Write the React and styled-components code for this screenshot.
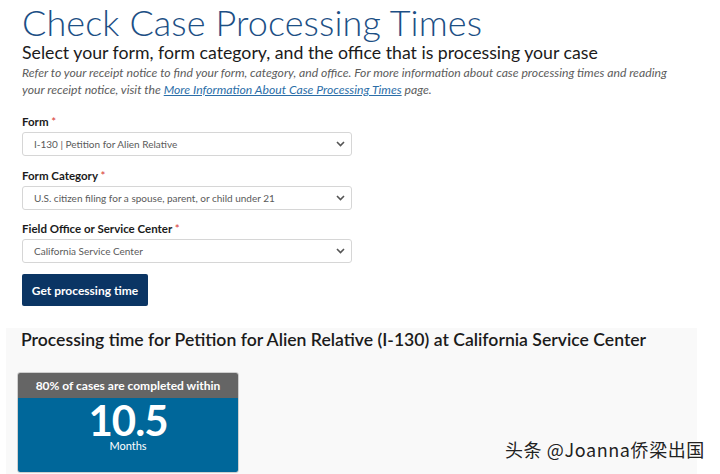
import React from "react";
import styled, { createGlobalStyle } from "styled-components";

const Global = createGlobalStyle`
  body {
    margin: 0;
    background: #fff;
    font-family: Lato, "Liberation Sans", sans-serif;
  }
`;

const Page = styled.div`
  width: 720px;
  height: 474px;
  overflow: hidden;
  position: relative;
`;

const Top = styled.div`
  padding: 0 0 0 22px;
`;

const Title = styled.h1`
  margin: 0;
  font-weight: 300;
  font-size: 36px;
  line-height: 44px;
  color: #1c4f85;
  letter-spacing: 0.1px;
`;

const Subtitle = styled.h2`
  margin: -2px 0 0;
  font-weight: 400;
  font-size: 17.7px;
  line-height: 21px;
  color: #1b1b1b;
`;

const Intro = styled.p`
  margin: 1px 0 0;
  font-style: italic;
  font-size: 12.2px;
  line-height: 17px;
  color: #5c5c5c;
  white-space: nowrap;

  a {
    color: #2b6ea8;
    text-decoration: underline;
  }
`;

const Form = styled.form`
  display: flex;
  flex-direction: column;
  align-items: flex-start;
  gap: 12.5px;
  margin-top: 17px;
`;

const Field = styled.div`
  display: flex;
  flex-direction: column;
`;

const Label = styled.label`
  font-size: 11.5px;
  font-weight: 700;
  color: #1b1b1b;
  line-height: 14px;
  margin-bottom: 3px;

  span {
    color: #d83933;
    font-weight: 400;
  }
`;

const SelectBox = styled.div`
  width: 330px;
  height: 24px;
  box-sizing: border-box;
  border: 1px solid #d6d6d6;
  border-radius: 3px;
  display: flex;
  align-items: center;
  justify-content: space-between;
  padding: 0 6px 0 11px;
  font-size: 10px;
  color: #5a5a5a;
  background: #fff;
`;

const Button = styled.button`
  margin-top: -1.5px;
  width: 126px;
  height: 32px;
  border: none;
  border-radius: 2px;
  background: #0b3564;
  color: #fff;
  font-family: inherit;
  font-weight: 700;
  font-size: 12px;
  padding: 0;
`;

const Results = styled.section`
  margin: 22px 0 0 6px;
  width: 691px;
  height: 160px;
  background: #f9f9f9;
  padding: 1px 0 0 11px;
  box-sizing: border-box;
`;

const ResultTitle = styled.h3`
  margin: 0 0 0 4px;
  font-size: 17.6px;
  font-weight: 600;
  line-height: 22px;
  color: #1b1b1b;
`;

const Card = styled.div`
  margin-top: 21px;
  width: 220px;
  border-radius: 3px;
  overflow: hidden;
  border: 1px solid #cfcfcf;
`;

const CardHead = styled.div`
  height: 25px;
  background: #656565;
  color: #fff;
  font-size: 12px;
  font-weight: 700;
  display: flex;
  align-items: center;
  justify-content: center;
`;

const CardBody = styled.div`
  height: 74px;
  background: #00679a;
  color: #fff;
  display: flex;
  flex-direction: column;
  align-items: center;
  padding-top: 2px;
  box-sizing: border-box;
`;

const Big = styled.div`
  font-size: 42px;
  font-weight: 700;
  line-height: 40px;
  letter-spacing: -1px;
`;

const Unit = styled.div`
  font-size: 11px;
  line-height: 12px;
`;

const Watermark = styled.div`
  position: absolute;
  left: 505px;
  top: 436px;
  font-family: "Noto Sans CJK SC", "Liberation Sans", sans-serif;
  font-size: 18px;
  letter-spacing: 0.6px;
  color: #222;
  text-shadow: 0 0 2px #fff;
`;

const Chevron = () => (
  <svg width="9" height="6" viewBox="0 0 9 6">
    <path d="M1 1l3.5 3.5L8 1" fill="none" stroke="#555" strokeWidth="1.6" />
  </svg>
);

const fields = [
  { label: "Form", value: "I-130 | Petition for Alien Relative" },
  { label: "Form Category", value: "U.S. citizen filing for a spouse, parent, or child under 21" },
  { label: "Field Office or Service Center", value: "California Service Center" },
];

export default function App() {
  return (
    <Page>
      <Global />
      <Top>
        <Title>Check Case Processing Times</Title>
        <Subtitle>Select your form, form category, and the office that is processing your case</Subtitle>
        <Intro>
          Refer to your receipt notice to find your form, category, and office. For more information about case processing times and reading
          <br />
          your receipt notice, visit the <a>More Information About Case Processing Times</a> page.
        </Intro>
        <Form>
          {fields.map((f) => (
            <Field key={f.label}>
              <Label>
                {f.label} <span>*</span>
              </Label>
              <SelectBox>
                {f.value}
                <Chevron />
              </SelectBox>
            </Field>
          ))}
          <Button type="button">Get processing time</Button>
        </Form>
      </Top>
      <Results>
        <ResultTitle>Processing time for Petition for Alien Relative (I-130) at California Service Center</ResultTitle>
        <Card>
          <CardHead>80% of cases are completed within</CardHead>
          <CardBody>
            <Big>10.5</Big>
            <Unit>Months</Unit>
          </CardBody>
        </Card>
      </Results>
      <Watermark>头条 @Joanna侨梁出国</Watermark>
    </Page>
  );
}
